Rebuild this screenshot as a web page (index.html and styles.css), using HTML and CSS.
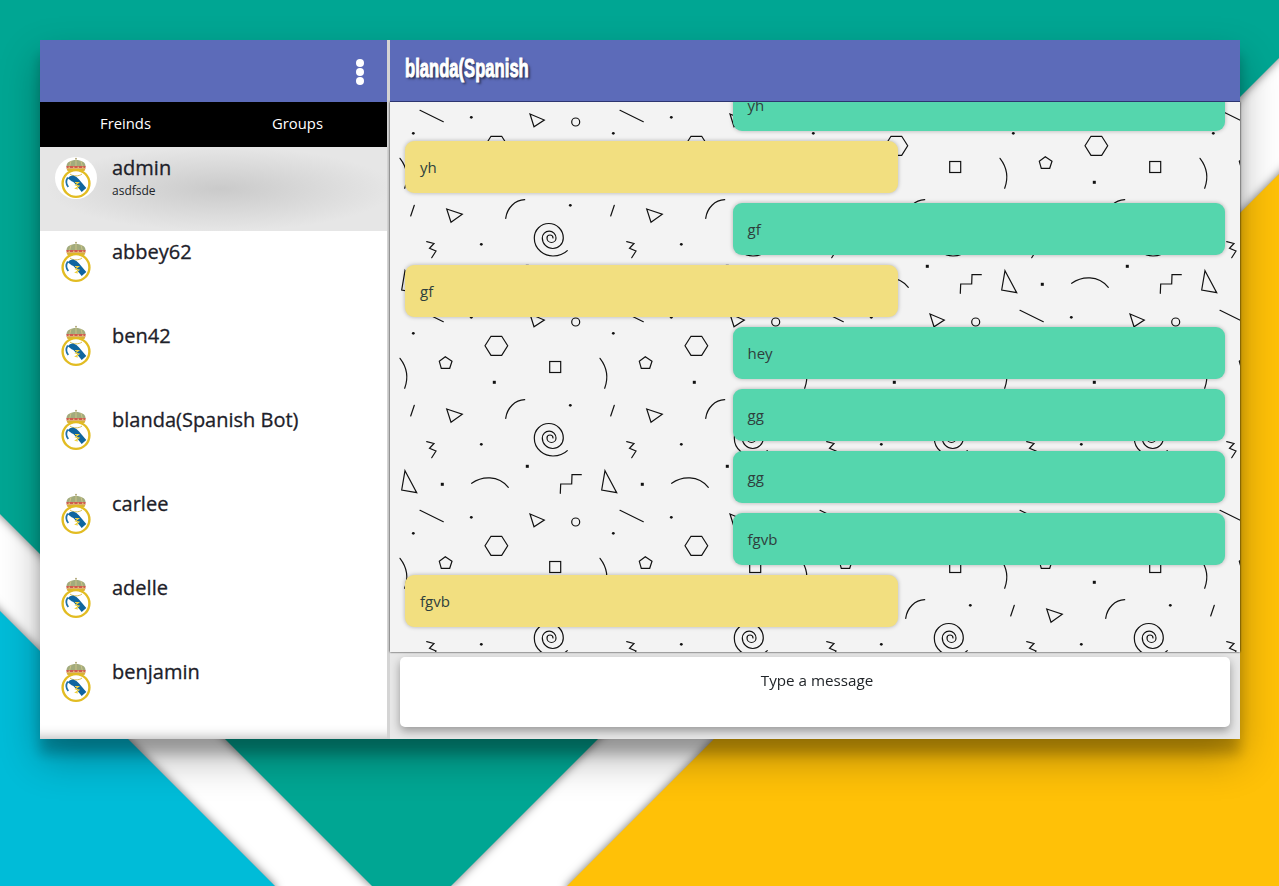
FILE: index.html
```html
<!DOCTYPE html>
<html lang="en">
<head>
<meta charset="utf-8">
<title>Chat</title>
<link rel="stylesheet" href="styles.css">
</head>
<body>
<svg class="wallpaper" viewBox="0 0 1279 886" width="1279" height="886" aria-hidden="true">
  <polygon class="shard" fill="#00a693" points="-40,-40 1319,-40 1319,18 451,886 372,886 -40,474"/>
  <polygon class="shard" fill="#00bcd8" points="-40,571 275,886 275,926 -40,926"/>
  <polygon class="shard" fill="#ffc107" points="1319,134 567,886 567,926 1319,926"/>
</svg>
<svg class="defs" width="0" height="0" aria-hidden="true">
  <symbol id="crest" viewBox="0 0 42 42">
    <circle cx="21" cy="1.800" r="1" fill="#b0a878"/>
    <path d="M11.500 10C11 5 16 3 21 3s10 2 9.500 7z" fill="#a2ab7c"/>
    <path d="M21 3v7M16 4l-1.500 6M26 4l1.500 6" stroke="#d6c98c" stroke-width=".8"/>
    <rect x="11.500" y="9" width="19" height="2.500" fill="#cf5a50"/>
    <path d="M13.500 10.200h1.500M18 10.200h1.500M22.500 10.200h1.500M27 10.200h1.500" stroke="#ecd97a" stroke-width="1.100"/>
    <path d="M11.500 11.500h19l-1 2.500h-17z" fill="#d8b23a"/>
    <circle cx="21" cy="26.500" r="13.400" fill="#fff" stroke="#e2bc22" stroke-width="2.400"/>
    <path d="M15 17c3 2.500 9 2.500 12 0" fill="none" stroke="#d9bd4c" stroke-width="1"/>
    <path d="M15 23c2-2.500 4.500-1.500 6.500 1l7.500 9" fill="none" stroke="#0f659f" stroke-width="6"/>
    <path d="M12.800 20.500c-2 3-2 6.500.5 9.500" fill="none" stroke="#1f70a8" stroke-width="1.700"/>
    <path d="M20 25.500h3.500l-3 2.500 3.500 1-3.500 2.500 2.500.5" fill="none" stroke="#f0d040" stroke-width="1.100"/>
  </symbol>
</svg>
<main class="panel">
  <aside class="sidebar">
    <header class="side-head">
      <svg class="kebab" width="10" height="28" viewBox="0 0 10 28" aria-hidden="true">
        <circle cx="5" cy="5" r="4" fill="#fff"/>
        <circle cx="5" cy="14" r="4" fill="#fff"/>
        <circle cx="5" cy="23" r="4" fill="#fff"/>
      </svg>
    </header>
    <nav class="tabs"><span class="tab">Freinds</span><span class="tab">Groups</span></nav>
    <ul class="contacts">
      <li class="contact contact-active">
        <svg class="avatar avatar-active"><use href="#crest"/></svg>
        <div class="who"><div class="name">admin</div><div class="status">asdfsde</div></div>
      </li>
      <li class="contact"><svg class="avatar"><use href="#crest"/></svg><div class="who"><div class="name">abbey62</div></div></li>
      <li class="contact"><svg class="avatar"><use href="#crest"/></svg><div class="who"><div class="name">ben42</div></div></li>
      <li class="contact"><svg class="avatar"><use href="#crest"/></svg><div class="who"><div class="name">blanda(Spanish Bot)</div></div></li>
      <li class="contact"><svg class="avatar"><use href="#crest"/></svg><div class="who"><div class="name">carlee</div></div></li>
      <li class="contact"><svg class="avatar"><use href="#crest"/></svg><div class="who"><div class="name">adelle</div></div></li>
      <li class="contact"><svg class="avatar"><use href="#crest"/></svg><div class="who"><div class="name">benjamin</div></div></li>
    </ul>
  </aside>
  <section class="conversation">
    <header class="chat-head"><h1 class="chat-title">blanda(Spanish</h1></header>
    <div class="messages">
      <div class="msg msg-out">yh</div>
      <div class="msg msg-in">yh</div>
      <div class="msg msg-out">gf</div>
      <div class="msg msg-in">gf</div>
      <div class="msg msg-out">hey</div>
      <div class="msg msg-out">gg</div>
      <div class="msg msg-out">gg</div>
      <div class="msg msg-out">fgvb</div>
      <div class="msg msg-in">fgvb</div>
    </div>
    <footer class="composer"><div class="input">Type a message</div></footer>
  </section>
</main>
</body>
</html>
```
FILE: styles.css
```css
* { box-sizing: border-box; }
html, body { margin: 0; height: 100%; overflow: hidden; }
body {
  padding: 40px 39px 0 40px;
  background: #fff;
  font-family: "Open Sans", "Liberation Sans", sans-serif;
  color: #212529;
}
.wallpaper { position: fixed; left: 0; top: 0; z-index: -1; }
.shard { filter: drop-shadow(0 0 5px rgba(0, 0, 0, .55)); }
.defs { position: absolute; }

.panel {
  display: flex;
  width: 1200px;
  height: 699px;
  background: #d4d4d4;
  box-shadow: 0 19px 38px rgba(0, 0, 0, .3), 0 15px 12px rgba(0, 0, 0, .22);
}
.sidebar {
  display: flex;
  flex-direction: column;
  width: 347px;
  flex: none;
  background: #fff;
  box-shadow: inset 0 -14px 12px -12px rgba(0, 0, 0, .28);
}
.side-head {
  display: flex;
  align-items: center;
  justify-content: flex-end;
  height: 62px;
  padding: 2px 22px 0 0;
  background: #5c6bb9;
}
.tabs {
  display: grid;
  grid-template-columns: 171px 173px;
  height: 45px;
  background: #000;
}
.tab {
  text-align: center;
  line-height: 42px;
  font-size: 14.800px;
  color: #fff;
}
.contacts {
  flex: 1;
  margin: 0;
  padding: 0;
  list-style: none;
  overflow: hidden;
}
.contact {
  display: flex;
  gap: 15px;
  height: 84px;
  padding: 10px 15px;
}
.contact-active {
  background: radial-gradient(ellipse 50% 50% at 52% 50%, #cacaca 0%, #e6e6e6 100%);
}
.avatar { flex: none; width: 42px; height: 42px; }
.avatar-active { background: #fff; border-radius: 50%; }
.who { margin-top: -3px; }
.name { font-size: 20px; line-height: 28px; font-weight: 400; color: #1d2129; -webkit-text-stroke: .3px #1d2129; }
.status { font-size: 12px; line-height: 16px; margin-top: 1px; color: #212529; }

.conversation {
  display: flex;
  flex-direction: column;
  width: 850px;
  margin-left: 3px;
  background: #e8e8e8;
}
.chat-head {
  position: relative;
  z-index: 1;
  display: flex;
  align-items: center;
  height: 62px;
  flex: none;
  padding-left: 15px;
  background: #5c6bb9;
  border-bottom: 1px solid #2d3570;
}
.chat-title {
  margin: 0 0 4px;
  font-family: "Liberation Sans", sans-serif;
  font-size: 25px;
  font-weight: 700;
  color: #fff;
  transform: scaleX(.665);
  transform-origin: left center;
  -webkit-text-stroke: 1px #fff;
  text-shadow: 3px 2px 3px rgba(0, 0, 0, .6);
}
.messages {
  display: flex;
  flex-direction: column;
  justify-content: flex-end;
  gap: 10px;
  height: 550px;
  flex: none;
  overflow: hidden;
  padding: 0 15px 25px 15px;
  box-shadow: 0 0 2px rgba(0, 0, 0, .95);
  background-color: #f3f3f3;
  background-position: 0 -2px;
  background-image: url("data:image/svg+xml,%3Csvg xmlns='http://www.w3.org/2000/svg' width='200' height='200' viewBox='0 0 200 200'%3E%3Cg fill='none' stroke='%23111' stroke-width='1.200' stroke-linecap='round' stroke-linejoin='miter'%3E%3Cpath d='M20.700 116L24.300 105.300'/%3E%3Cpath d='M56.700 109L72.300 114.300L61 122.300Z'/%3E%3Cpath d='M115.700 118.300C117 108 125 100 134.700 99.700'/%3E%3Cpath d='M163 138A3 3 0 0 0 157 138A4.500 4.500 0 0 0 166 138A6.850 6.850 0 0 0 152.300 138A10.500 10.500 0 0 0 173.300 138A14.500 14.500 0 0 0 144.300 138C144.300 150 155 156 163 156C169 156 174 154 177.300 150.700'/%3E%3Cpath d='M36.700 141.700L44 143.500L39.500 148.300L46 151L41.700 157.700'/%3E%3Cpath d='M15 170.700L26.700 192.700L11.700 190Z'/%3E%3Cpath d='M81.700 183.300C92 176 108 175 118.300 187.300'/%3E%3Cpath d='M170.300 193.300L170.700 184L181.700 184L182 174.700L191.300 174.700'/%3E%3Cpath d='M30 10.300L53.300 21.700'/%3E%3Cpath d='M140 14L154.300 20L144 26.700Z'/%3E%3Ccircle cx='185.700' cy='22' r='4'/%3E%3Cpath d='M95 45.800L101 36.300L111.700 36.300L117.700 45.800L111.700 55.300L101 55.300Z'/%3E%3Cpath d='M55.300 56.700L62 61.300L59.700 68.300L51.300 68.300L49.300 61.300Z'/%3E%3Crect x='159.700' y='61.500' width='11' height='11'/%3E%3Cpath d='M10 58.300C16 66 19.500 75 14.700 88.300'/%3E%3C/g%3E%3Cg fill='%23111'%3E%3Ccircle cx='180.300' cy='105.300' r='1.400'/%3E%3Ccircle cx='91.300' cy='144.300' r='1.400'/%3E%3Ccircle cx='81.300' cy='17.300' r='1.400'/%3E%3Ccircle cx='23.300' cy='33.300' r='1.400'/%3E%3Crect x='50.800' y='182.800' width='3' height='3'/%3E%3Crect x='135.800' y='164.800' width='3' height='3'/%3E%3Crect x='102.800' y='80.800' width='3' height='3'/%3E%3C/g%3E%3C/svg%3E");
}
.msg {
  flex: none;
  display: flex;
  align-items: center;
  width: 492.500px;
  height: 52px;
  padding-left: 15px;
  font-size: 15px;
  color: #2f3f3d;
  border-radius: 9px;
  box-shadow: 0 0 4px rgba(0, 0, 0, .28);
}
.msg-in { background: #f2df80; align-self: flex-start; }
.msg-out { background: #55d6ad; align-self: flex-end; }
.composer {
  flex: 1;
  padding: 5px 10px 12px;
}
.input {
  height: 70px;
  padding: 13px 0 0 4px;
  text-align: center;
  font-size: 15.200px;
  line-height: 20px;
  color: #212529;
  background: #fff;
  border-radius: 5px;
  box-shadow: 0 4px 10px rgba(0, 0, 0, .35);
}
```
